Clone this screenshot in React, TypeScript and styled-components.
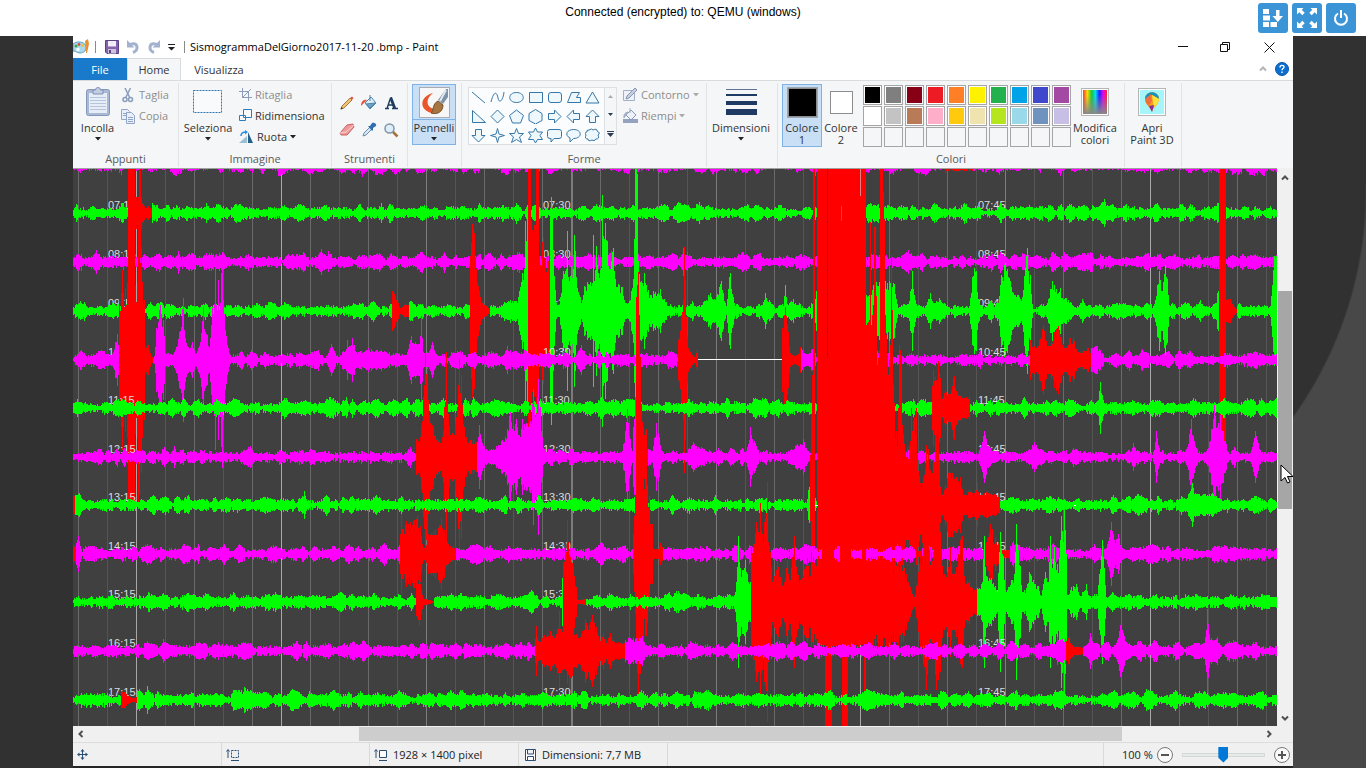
import React from "react";
import styled, { createGlobalStyle, css } from "styled-components";

const GlobalStyle = createGlobalStyle`
  * { box-sizing: border-box; }
  html, body { margin: 0; padding: 0; }
  body { background: #484848; overflow: hidden; }
  button { font: inherit; color: inherit; }
`;

/* ---------- seismogram data ---------- */

type Point = [x: number, up: number, down?: number];
interface Burst { red?: boolean; pts: Point[] }
interface Row { hour: number; y: number; bursts: Burst[]; gap?: [number, number] }

const WIDTH = 1204;
const HEIGHT = 558;

const ROWS: Row[] = [
  { hour: 6, y: -3, bursts: [{ red: true, pts: [[872, 8], [876, 6], [884, 7], [899, 6]] }] },
  { hour: 7, y: 45, bursts: [
    { red: true, pts: [[55, 60], [61, 60], [62, 16], [65, 16], [66, 50], [67, 45], [68, 16], [70, 10], [73, 5], [75, 7], [78, 4]] },
    { pts: [[130, 5], [133, 10], [136, 5]] },
    { pts: [[1024, 5], [1031, 14], [1036, 5]] },
  ] },
  { hour: 8, y: 94, bursts: [
    { pts: [[18, 4], [23, 12], [28, 5]] },
    { pts: [[243, 4], [248, 13], [254, 5]] },
    { pts: [[607, 4], [610, 14], [613, 4]] },
    { pts: [[824, 4], [835, 12], [842, 5]] },
  ] },
  { hour: 9, y: 143, bursts: [
    { red: true, pts: [[319, 20], [321, 17], [325, 8], [327, 3], [332, 7], [335, 6]] },
    { red: true, pts: [[397, 55], [399, 87], [401, 78], [403, 42], [405, 25], [408, 10], [412, 6], [416, 3]] },
    { pts: [[443, 4], [446, 20], [449, 38], [451, 42], [452, 90], [454, 96], [455, 60]] },
    { red: true, pts: [[455, 150], [457, 150], [458, 90], [462, 85], [463, 150], [465, 150], [466, 55], [470, 73], [471, 53], [474, 55], [476, 60]] },
    { pts: [[477, 100], [478, 114], [479, 95], [480, 60], [483, 8], [486, 6], [490, 40], [493, 42], [494, 80], [495, 34], [497, 35], [500, 42], [501, 76], [502, 60], [503, 34], [507, 14], [508, 8], [511, 25], [514, 29], [519, 28], [520, 76], [521, 30], [523, 65], [525, 38], [528, 43], [529, 116], [530, 75], [532, 88], [534, 70], [535, 45], [540, 63], [542, 32], [546, 26], [549, 24], [552, 8], [556, 10], [560, 32], [562, 143], [563, 143], [564, 137], [565, 50], [568, 30], [570, 25], [571, 38], [573, 26], [577, 16], [580, 20], [584, 17], [587, 22], [591, 12], [597, 3]] },
    { pts: [[614, 3], [619, 10], [624, 2], [630, 9], [637, 18], [643, 14], [648, 30], [650, 18], [653, 4], [656, 34], [657, 38], [660, 14], [662, 5]] },
    { pts: [[689, 3], [692, 18], [695, 4]] },
    { pts: [[710, 5], [712, 26], [714, 7], [720, 12], [724, 4]] },
    { pts: [[738, 8], [742, 12], [743, 20], [745, 10]] },
    { pts: [[793, 16], [794, 14], [797, 20], [802, 30], [816, 30], [821, 27], [824, 7]] },
    { pts: [[835, 4], [837, 20], [839, 40], [841, 16], [844, 5]] },
    { pts: [[853, 6], [857, 18], [861, 8], [866, 13], [872, 5]] },
    { pts: [[896, 5], [899, 34], [901, 43], [903, 40], [905, 12], [909, 5]] },
    { pts: [[925, 6], [928, 36], [932, 48], [934, 42], [937, 30], [940, 18], [945, 16], [949, 14], [951, 35], [954, 63], [955, 40], [957, 36], [959, 7]] },
    { pts: [[973, 5], [977, 22], [979, 30], [981, 26], [987, 23], [989, 13], [993, 13], [998, 8], [1004, 3], [1009, 12], [1014, 3]] },
    { pts: [[1081, 7], [1084, 26], [1086, 40], [1089, 20], [1092, 46], [1094, 32], [1096, 6]] },
    { pts: [[1121, 5], [1127, 11], [1131, 5]] },
    { pts: [[1143, 8], [1144, 18], [1145, 20]] },
    { red: true, pts: [[1146, 155], [1152, 155], [1153, 11], [1157, 12], [1160, 6], [1163, 2]] },
    { pts: [[1197, 5], [1199, 26], [1201, 55], [1203, 55]] },
  ] },
  { hour: 10, y: 192, gap: [625, 708], bursts: [
    { pts: [[39, 6], [42, 18], [44, 26], [45, 15]] },
    { red: true, pts: [[46, 60], [48, 67], [49, 90], [50, 67], [52, 72], [54, 78], [55, 143], [61, 143], [62, 75], [64, 78], [65, 143], [68, 113], [69, 78], [71, 60], [72, 14], [75, 15], [79, 3]] },
    { pts: [[81, 4], [83, 32], [86, 50], [87, 55], [90, 40], [92, 7], [99, 5], [102, 10], [106, 28], [110, 62], [111, 30], [115, 13], [119, 18], [122, 6], [127, 18], [130, 53], [132, 28], [134, 25], [136, 12], [139, 52], [142, 90], [143, 55], [145, 80], [146, 50], [149, 108], [150, 60], [153, 24], [156, 7]] },
    { pts: [[254, 4], [258, 16], [262, 7]] },
    { pts: [[271, 5], [274, 20], [276, 14], [279, 22], [283, 8], [295, 12], [307, 9], [316, 8]] },
    { pts: [[334, 8], [338, 24], [342, 18], [346, 16], [348, 42], [350, 8], [354, 7], [359, 18], [363, 6]] },
    { pts: [[430, 5], [434, 14], [441, 5]] },
    { pts: [[503, 5], [508, 15], [513, 5]] },
    { red: true, pts: [[605, 20], [608, 45], [610, 60], [611, 113], [612, 80], [613, 43], [615, 12], [619, 5], [622, 4], [624, 10]] },
    { red: true, pts: [[709, 32], [711, 45], [712, 53], [713, 44], [715, 28], [717, 7], [720, 5], [725, 6], [727, 13]] },
    { pts: [[728, 12], [731, 7], [735, 6]] },
    { red: true, pts: [[957, 20], [961, 14], [966, 20], [970, 35], [974, 13], [978, 18], [981, 28], [985, 34], [988, 22], [992, 13], [996, 22], [1000, 22], [1004, 9], [1010, 10], [1015, 12], [1017, 7]] },
    { pts: [[1018, 12], [1024, 14], [1030, 6]] },
  ] },
  { hour: 11, y: 240, bursts: [
    { pts: [[0, 5], [4, 9], [9, 5]] },
    { red: true, pts: [[859, 22], [860, 38], [863, 28], [865, 47], [867, 30], [868, 11], [872, 18], [876, 14], [881, 32], [884, 16], [888, 12], [896, 12]] },
    { pts: [[1024, 4], [1027, 26], [1030, 8], [1033, 4]] },
  ] },
  { hour: 12, y: 289, bursts: [
    { red: true, pts: [[343, 18], [347, 20], [350, 60], [352, 104], [354, 88], [356, 42], [360, 30], [364, 18], [369, 20], [371, 50], [373, 105], [374, 55], [376, 30], [380, 24], [384, 50], [386, 98], [388, 82], [391, 30], [393, 20], [403, 15]] },
    { pts: [[404, 15], [406, 32], [409, 14], [414, 7], [420, 8], [432, 20], [437, 45], [439, 28], [443, 38], [447, 20], [449, 38], [453, 34], [457, 36], [460, 68], [462, 40], [465, 78], [467, 50], [469, 20], [470, 4]] },
    { pts: [[549, 6], [552, 26], [554, 48], [557, 18], [559, 6]] },
    { pts: [[560, 30], [562, 60]] },
    { red: true, pts: [[563, 160], [565, 185], [567, 100], [569, 35], [573, 28], [574, 8]] },
    { pts: [[579, 6], [583, 34], [586, 20], [588, 7]] },
    { pts: [[615, 8], [620, 15], [625, 10], [630, 6]] },
    { pts: [[673, 6], [677, 30], [681, 16], [685, 7]] },
    { pts: [[718, 8], [724, 13], [730, 18], [734, 7]] },
    { pts: [[906, 7], [911, 26], [915, 11], [923, 5]] },
    { pts: [[955, 7], [961, 15], [966, 7]] },
    { pts: [[1057, 5], [1060, 14], [1063, 6]] },
    { pts: [[1081, 7], [1083, 26], [1086, 9]] },
    { pts: [[1113, 8], [1117, 28], [1118, 38], [1121, 16], [1124, 7]] },
    { pts: [[1135, 9], [1138, 28], [1141, 52], [1144, 30], [1147, 42], [1150, 26], [1153, 13]] },
    { pts: [[1178, 7], [1182, 26], [1187, 7]] },
  ] },
  { hour: 13, y: 337, bursts: [
    { red: true, pts: [[0, 9], [1, 9]] },
    { pts: [[2, 10], [6, 12], [11, 5]] },
    { pts: [[225, 6], [229, 9], [231, 14], [234, 4]] },
    { pts: [[734, 6], [735, 15], [736, 18]] },
    { red: true, pts: [[737, 50, 16], [738, 90, 50], [739, 130, 80], [740, 345, 95], [741, 345, 95]] },
    { red: true, pts: [[744, 345, 140], [751, 345, 140], [752, 345, 225], [758, 345, 225], [759, 345, 140], [768, 345, 140], [769, 345, 225], [774, 345, 225], [775, 345, 140], [790, 345, 140], [791, 345, 205], [792, 345, 205], [793, 180, 140], [796, 185, 130], [797, 283, 130], [798, 180, 130], [800, 200, 130], [801, 278, 130], [802, 278, 120], [804, 140, 120], [806, 155, 130], [807, 342, 130], [809, 342, 110], [811, 285, 100], [812, 190, 90], [815, 130, 80], [817, 160, 75], [818, 250, 75], [819, 195, 70], [820, 120, 65], [824, 60, 55], [826, 160, 60], [828, 150, 80], [829, 80, 60], [832, 55, 40], [836, 60, 45], [838, 97, 55], [843, 97, 60], [844, 50, 60], [847, 22, 30], [851, 30, 60], [853, 60, 100], [855, 56, 90], [857, 35, 50], [860, 45, 60], [862, 70, 85], [865, 75, 75], [867, 18], [869, 10], [872, 20], [875, 32], [879, 32], [882, 28], [887, 28], [889, 16], [893, 10], [896, 15], [901, 12], [904, 22], [906, 12], [914, 14], [921, 11], [926, 9]] },
    { pts: [[1113, 6], [1119, 22], [1122, 12], [1130, 11], [1139, 12], [1148, 6]] },
  ] },
  { hour: 14, y: 386, bursts: [
    { red: true, pts: [[0, 9], [2, 9]] },
    { pts: [[3, 11], [5, 18], [8, 5]] },
    { red: true, pts: [[327, 20], [328, 40], [330, 25], [333, 33], [337, 32], [340, 33], [344, 38], [347, 28], [349, 10], [352, 4], [355, 20], [360, 22], [365, 26], [368, 36], [371, 24], [374, 12], [378, 8], [382, 7]] },
    { pts: [[523, 7], [528, 12], [534, 6]] },
    { red: true, pts: [[560, 20], [562, 60], [563, 95], [565, 141], [567, 120], [570, 90], [573, 82], [576, 58], [577, 30], [579, 30], [580, 6], [585, 5], [587, 11], [589, 7]] },
    { pts: [[590, 5], [595, 7], [600, 4]] },
    { red: true, pts: [[749, 4], [760, 4]] },
    { red: true, pts: [[767, 4], [777, 4]] },
    { red: true, pts: [[789, 4], [792, 4]] },
    { red: true, pts: [[843, 4], [848, 4]] },
    { red: true, pts: [[862, 4], [868, 4]] },
    { red: true, pts: [[911, 10], [914, 16], [917, 30], [919, 25], [920, 12], [922, 17], [925, 10], [928, 4], [936, 4]] },
    { pts: [[937, 8], [940, 13], [944, 10], [949, 7]] },
    { pts: [[1033, 6], [1037, 24], [1038, 32], [1041, 14], [1045, 20], [1048, 8], [1053, 4]] },
  ] },
  { hour: 15, y: 434, bursts: [
    { pts: [[83, 5], [90, 9], [96, 5]] },
    { red: true, pts: [[343, 14], [346, 24], [348, 12], [350, 4], [354, 3], [360, 1]] },
    { pts: [[452, 7], [458, 12], [464, 6]] },
    { pts: [[488, 6], [489, 24]] },
    { red: true, pts: [[490, 40], [492, 60], [494, 82], [495, 60], [497, 45], [500, 36], [503, 15], [504, 3], [512, 3]] },
    { pts: [[597, 5], [603, 11], [611, 9], [614, 4]] },
    { pts: [[661, 4], [663, 20], [665, 66], [667, 34], [670, 32], [672, 42], [674, 28], [677, 20]] },
    { red: true, pts: [[678, 55], [681, 58], [683, 80], [685, 70], [687, 99], [689, 68], [692, 84], [694, 120], [695, 60], [697, 50], [699, 20], [702, 28], [704, 42], [707, 25], [711, 20], [714, 42], [716, 22], [719, 45], [721, 66], [723, 35], [727, 22], [732, 35], [734, 44], [737, 26], [738, 50], [742, 38], [748, 40, 46], [755, 40, 52], [765, 40, 47], [775, 40, 50], [785, 40, 45], [795, 40, 50], [805, 40, 45], [815, 40, 47], [825, 40, 44], [830, 40], [833, 28], [837, 15], [841, 5], [845, 30], [847, 50], [850, 62], [853, 88], [856, 52], [860, 50], [863, 88], [867, 70], [869, 36], [873, 25], [877, 55], [879, 28], [883, 35], [887, 62], [889, 66], [891, 26], [896, 22], [899, 14], [903, 13]] },
    { pts: [[904, 14], [909, 20], [911, 66], [913, 26], [918, 24], [922, 16], [924, 10], [927, 70], [930, 46], [932, 12], [938, 22], [941, 28], [943, 78], [945, 52], [947, 36], [949, 10], [953, 14], [956, 30], [960, 22], [965, 16], [968, 6], [972, 30], [975, 20], [977, 66], [979, 34], [981, 55], [984, 38], [986, 44], [988, 86], [990, 60], [991, 98], [993, 48], [994, 7], [998, 15], [1003, 18], [1007, 6], [1013, 18], [1016, 4]] },
    { pts: [[1024, 5], [1026, 28], [1029, 62], [1031, 34], [1033, 4], [1039, 10], [1045, 4]] },
    { pts: [[1182, 5], [1188, 8], [1196, 7], [1203, 5]] },
  ] },
  { hour: 16, y: 483, bursts: [
    { pts: [[86, 4], [90, 12], [94, 5]] },
    { pts: [[274, 5], [280, 10], [285, 5], [290, 11], [298, 4]] },
    { red: true, pts: [[462, 12], [463, 25], [466, 9], [470, 15], [477, 20], [480, 17], [484, 22], [486, 40], [488, 22], [491, 18], [496, 38], [499, 25], [504, 16], [509, 20], [512, 32], [516, 26], [519, 36], [523, 24], [526, 12], [530, 18], [533, 8], [537, 18], [541, 9], [551, 8]] },
    { pts: [[552, 11], [556, 14], [562, 12], [569, 15], [573, 6]] },
    { pts: [[981, 4], [984, 14], [988, 11], [992, 13]] },
    { red: true, pts: [[993, 10], [996, 14], [999, 6], [1004, 5], [1009, 3]] },
    { pts: [[1010, 4], [1015, 8], [1017, 18], [1020, 8], [1025, 3]] },
    { pts: [[1042, 4], [1046, 20], [1048, 38], [1050, 18], [1053, 8], [1062, 3]] },
    { pts: [[1128, 4], [1132, 14], [1134, 42], [1136, 17], [1140, 10], [1144, 14], [1148, 5]] },
  ] },
  { hour: 17, y: 532, bursts: [
    { red: true, pts: [[48, 8], [51, 8], [55, 4], [60, 2], [63, 3]] },
    { pts: [[70, 4], [74, 14], [77, 4]] },
    { pts: [[168, 4], [171, 13], [178, 9], [186, 8], [196, 5]] },
  ] },
];

/* minute rules, the five-minute ones are brighter */
const RULES: [number, string, number][] = Array.from({ length: 42 }, (_, i) => {
  const x = Math.round(5 + i * 28.98);
  if ([2, 7, 27, 37].includes(i)) return [x, "#a8a8a8", 1];
  if (i % 5 === 2) return [x, "#7c7c7c", i === 17 ? 2 : 1];
  return [x, i % 2 ? "#555555" : "#6a6a6a", 1];
});

const COLORS = { green: "#00ff00", magenta: "#ff00ff", red: "#ff0000" };

function random(seed: number) {
  let s = seed;
  return () => {
    s = (s * 1664525 + 1013904223) >>> 0;
    return s / 4294967296;
  };
}

/* background tremor: swelling beads with a ragged edge */
function noise(seed: number): number[] {
  const rnd = random(seed);
  const out: number[] = [];
  let from = 3;
  let high = true;
  while (out.length < WIDTH) {
    const to = high ? 4 + Math.pow(rnd(), 1.4) * 6 : 2 + rnd() * 3;
    const steps = 3 + Math.floor(rnd() * 6);
    for (let i = 0; i < steps; i++) {
      out.push(from + (to - from) * (i / steps) + (rnd() - 0.5) * 3);
    }
    from = to;
    high = !high || rnd() > 0.7;
  }
  return out.map((v) => Math.max(2, v));
}

function buildRow(row: Row) {
  const base = noise(row.hour * 7919 + 31);
  const rnd = random(row.hour * 104729 + 7);
  const up = base.slice(0, WIDTH);
  const down = up.map((v) => Math.max(1, v + (rnd() - 0.5) * 2));
  const red = new Array<boolean>(WIDTH).fill(false);
  row.bursts.forEach((burst) => {
    for (let k = 0; k < burst.pts.length - 1; k++) {
      const [x0, u0, d0 = u0] = burst.pts[k];
      const [x1, u1, d1 = u1] = burst.pts[k + 1];
      for (let x = x0; x <= x1 && x < WIDTH; x++) {
        const t = x1 === x0 ? 0 : (x - x0) / (x1 - x0);
        const steady = x === x0 || x === x1 || u0 + u1 > 280;
        const j = steady ? 1 : 0.7 + rnd() * 0.32;
        const u = (u0 + (u1 - u0) * t) * j;
        const d = (d0 + (d1 - d0) * t) * j;
        up[x] = burst.red ? u : Math.max(up[x], u);
        down[x] = burst.red ? d : Math.max(down[x], d);
        if (burst.red) red[x] = true;
      }
    }
  });
  let plain = "";
  let hot = "";
  for (let x = 0; x < WIDTH; x++) {
    if (row.gap && x >= row.gap[0] && x <= row.gap[1]) continue;
    const top = Math.round(row.y - up[x]);
    const h = Math.max(2, Math.round(row.y + down[x]) - top);
    const part = `M${x} ${top}h1v${h}h-1z`;
    if (red[x]) hot += part;
    else plain += part;
  }
  return { plain, hot };
}

const TRACES = ROWS.map((row) => ({ row, ...buildRow(row) }));
const pad = (n: number) => String(n).padStart(2, "0");

const Plot = styled.svg`
  display: block;
  width: 100%;
  height: auto;
  background: #404040;
  font-family: "Liberation Sans", sans-serif;
  font-size: 11px;
`;

function Seismogram() {
  return (
    <Plot viewBox={`0 0 ${WIDTH} ${HEIGHT}`} role="img" aria-label="Seismogram">
      <g shapeRendering="crispEdges">
        {RULES.map(([x, fill, w]) => (
          <rect key={x} x={x} y="0" width={w} height={HEIGHT} fill={fill} />
        ))}
      </g>
      {TRACES.map(({ row, plain, hot }) => (
        <g key={row.hour}>
          {row.hour > 6 &&
            [[35, "15"], [470, "30"], [905, "45"]].map(([x, m]) => (
              <text key={m} x={x} y={row.y - 4} fill="#dcdcdc">{`${pad(row.hour)}:${m}`}</text>
            ))}
          <g shapeRendering="crispEdges">
            <path d={plain} fill={row.hour % 2 ? COLORS.green : COLORS.magenta} />
            <path d={hot} fill={COLORS.red} />
            {row.gap && <rect x={row.gap[0]} y={row.y - 1} width={row.gap[1] - row.gap[0] + 1} height="1" fill="#ffffff" />}
          </g>
        </g>
      ))}
      <g shapeRendering="crispEdges">
        <path d="M742 337h3v1h-3zM1001 337h2v1h-2z" fill="#fff" />
        <path d="M754 0h1v190h-1z" fill="#a01010" />
        <path d="M768 38h1v15h-1z" fill="#30a020" />
        <path d="M787 0h1v28h-1z" fill="#e08080" />
        <path d="M0 0h1204v1h-1204z" fill="#a0a0a0" />
      </g>
    </Plot>
  );
}

/* ---------- page shell ---------- */

const Page = styled.div`
  min-height: 100vh;
  display: flex;
  flex-direction: column;
  background:
    linear-gradient(#313131, #313131) left / 50% 100% no-repeat,
    linear-gradient(#313131, #313131) top / 100% 184px no-repeat,
    radial-gradient(circle at calc(100% - 390px) 190px, #313131 389px, #484848 391px);
  font-family: "Open Sans", "Noto Sans", sans-serif;
  font-size: 11px;
  line-height: 15px;
  color: #1e1e1e;
`;

const TopBar = styled.header`
  display: grid;
  grid-template-columns: 1fr auto 1fr;
  align-items: start;
  height: 36px;
  padding: 3px 10px;
  background: #fff;
  font: 12px/18px "Liberation Sans", sans-serif;
  color: #000;
`;

const Actions = styled.div`
  grid-column: 3;
  justify-self: end;
  display: flex;
  gap: 4px;
`;

const ActionButton = styled.button`
  display: grid;
  place-items: center;
  width: 30px;
  height: 30px;
  padding: 0;
  border: 0;
  border-radius: 3px;
  background: #3b94d6;
`;

const Status = styled.span`
  grid-column: 2;
`;

const Window = styled.main`
  flex: 1;
  display: flex;
  flex-direction: column;
  margin: 0 73px;
  background: #fff;
  border-bottom: 2px solid #252525;
`;

const TitleBar = styled.div`
  display: flex;
  align-items: center;
  height: 22px;
`;

const QuickTools = styled.div`
  display: flex;
  align-items: center;
`;

const IconButton = styled.button<{ $w?: number }>`
  display: grid;
  place-items: center;
  width: ${(p) => p.$w ?? 21}px;
  height: 20px;
  padding: 0;
  border: 0;
  background: none;
`;

const Divider = styled.span<{ $gap: number }>`
  width: 1px;
  height: 12px;
  margin: 0 ${(p) => p.$gap}px;
  background: #8a8a8a;
`;

const Title = styled.h1`
  flex: 1;
  margin: 0;
  padding-bottom: 1px;
  font-size: 11px;
  font-weight: 400;
  color: #000;
`;

const Tabs = styled.nav`
  display: flex;
  height: 22px;
`;

const Tab = styled.button<{ $kind: "file" | "active" | "plain" }>`
  width: ${(p) => (p.$kind === "plain" ? 76 : 54)}px;
  padding: 0;
  border: 0;
  background: none;
  color: #333;
  ${(p) => p.$kind === "file" && css`background: #1979ca; color: #fff;`}
  ${(p) => p.$kind === "active" && css`
    background: #f5f6f7;
    border: solid #dadbdc;
    border-width: 1px 1px 0;
  `}
`;

const TabEnd = styled.div`
  display: flex;
  align-items: center;
  margin-left: auto;
  padding-right: 2px;
`;

/* ---------- ribbon ---------- */

const Ribbon = styled.section`
  display: flex;
  height: 88px;
  padding: 2px 0 1px;
  background: #f5f6f7;
  border-top: 1px solid #dadbdc;
`;

const Group = styled.div<{ $w: number }>`
  display: flex;
  flex-direction: column;
  flex: none;
  width: ${(p) => p.$w}px;
  border-right: 1px solid #e2e3e4;
`;

const GroupBody = styled.div<{ $gap?: number; $pad?: number }>`
  flex: 1;
  display: flex;
  align-items: flex-start;
  gap: ${(p) => p.$gap ?? 0}px;
  padding: 1px 0 0 ${(p) => p.$pad ?? 4}px;
`;

const GroupName = styled.div`
  height: 16px;
  text-align: center;
  color: #5a5a5a;
`;

const BigButton = styled.button<{ $w: number; $on?: boolean }>`
  display: flex;
  flex-direction: column;
  align-items: center;
  width: ${(p) => p.$w}px;
  height: ${(p) => (p.$w === 44 ? 61 : 63)}px;
  padding: 0;
  border: 1px solid ${(p) => (p.$on ? "#7fb3e6" : "transparent")};
  background: ${(p) => (p.$on ? "#c9dff5" : "none")};
  line-height: 12px;
  white-space: nowrap;
  color: #333;
  > svg { margin-top: 3px; }
`;

const BigIcon = styled.span<{ $line?: boolean }>`
  display: grid;
  place-items: center;
  width: 100%;
  height: 35px;
  margin-bottom: 2px;
  border-bottom: 1px solid ${(p) => (p.$line ? "#7fb3e6" : "transparent")};
`;

const Stack = styled.div`
  display: flex;
  flex-direction: column;
`;

const SmallButton = styled.button<{ $off?: boolean }>`
  display: flex;
  align-items: center;
  gap: 3px;
  height: 21px;
  padding: 0;
  border: 0;
  background: none;
  white-space: nowrap;
  color: ${(p) => (p.$off ? "#8d8d8d" : "#333")};
`;

const ToolGrid = styled.div`
  display: grid;
  grid-template-columns: repeat(3, 22px);
  grid-auto-rows: 27px;
  padding: 6px 0 0 4px;
`;

const ToolButton = styled.button`
  display: grid;
  place-items: center;
  padding: 0;
  border: 0;
  background: none;
`;

const Gallery = styled.div`
  display: flex;
  width: 149px;
  height: 58px;
  margin-top: 3px;
  border: 1px solid #dcdfe3;
  background: #fbfcfd;
`;

const ShapeGrid = styled.div`
  display: grid;
  grid-template-columns: repeat(7, 19px);
  grid-auto-rows: 19px;
  width: 135px;
`;

const GallerySide = styled.div`
  flex: 1;
  display: flex;
  flex-direction: column;
  justify-content: space-around;
  align-items: center;
  border-left: 1px solid #dcdfe3;
  background: #f5f6f7;
`;

const ColorBox = styled.span<{ $c: string; $s: number }>`
  width: ${(p) => p.$s}px;
  height: ${(p) => p.$s}px;
  border: 1px solid #8d8d8d;
  outline: ${(p) => (p.$s > 25 ? "1px solid #9aa7b5" : "none")};
  background: ${(p) => p.$c};
`;

const Palette = styled.div`
  display: grid;
  grid-template-columns: repeat(10, 19px);
  grid-auto-rows: 20px;
  gap: 1px 2px;
  margin: 1px 0 0 3px;
`;

const Swatch = styled.button<{ $c?: string }>`
  padding: 0;
  border: 1px solid #a5a5a5;
  background: ${(p) => p.$c ?? "#f5f6f7"};
  box-shadow: inset 0 0 0 1px ${(p) => (p.$c ? "#fff" : "#f5f6f7")};
`;

const PALETTE = [
  "#000000", "#7f7f7f", "#880015", "#ed1c24", "#ff7f27", "#fff200", "#22b14c", "#00a2e8", "#3f48cc", "#a349a4",
  "#ffffff", "#c3c3c3", "#b97a57", "#ffaec9", "#ffc90e", "#efe4b0", "#b5e61d", "#99d9ea", "#7092be", "#c8bfe7",
];

/* ---------- canvas and status bar ---------- */

const Workspace = styled.div`
  display: grid;
  grid-template-columns: 1fr 16px;
`;

const VScroll = styled.div`
  display: flex;
  flex-direction: column;
  align-items: center;
  padding: 5px 0 3px;
  background: #f0f0f0;
`;

const VThumb = styled.div`
  position: relative;
  flex: 218;
  width: 14px;
  background: #a6a6a6;
`;

const Space = styled.div<{ $n: number }>`
  flex: ${(p) => p.$n};
`;

const Pointer = styled.svg`
  position: absolute;
  left: 2px;
  bottom: 25px;
`;

const HScroll = styled.div`
  display: flex;
  align-items: center;
  height: 16px;
  padding: 0 19px 0 3px;
  background: #f0f0f0;
`;

const HThumb = styled.div`
  flex: 763;
  height: 14px;
  background: #cdcdcd;
`;

const StatusBar = styled.footer`
  flex: 1;
  display: flex;
  min-height: 24px;
  border-top: 1px solid #dcdcdc;
  background: #f0f0f0;
  color: #222;
`;

const StatusCell = styled.div<{ $w: number }>`
  display: flex;
  align-items: center;
  gap: 5px;
  width: ${(p) => p.$w}px;
  padding-left: 4px;
  border-right: 1px solid #d9d9d9;
  white-space: nowrap;
`;

const ZoomArea = styled.div`
  display: flex;
  align-items: center;
  gap: 4px;
  width: 190px;
  margin-left: auto;
  padding-left: 18px;
  border-left: 1px solid #d9d9d9;
`;

const RoundButton = styled.button`
  display: grid;
  place-items: center;
  width: 16px;
  height: 16px;
  padding: 0;
  border: 1px solid #777;
  border-radius: 50%;
  background: #fafafa;
`;

const Slider = styled.input`
  appearance: none;
  width: 83px;
  height: 16px;
  margin: 0 5px;
  background: none;
  &::-webkit-slider-runnable-track {
    height: 4px;
    border: 1px solid #d3d8d8;
    background: #e8eaea;
  }
  &::-webkit-slider-thumb {
    appearance: none;
    width: 10px;
    height: 16px;
    margin-top: -7px;
    background: #0078d7;
    clip-path: polygon(0 0, 100% 0, 100% 70%, 50% 100%, 0 70%);
  }
`;

/* ---------- icons ---------- */

const Caret = ({ c = "#222" }: { c?: string }) => (
  <svg width="6" height="4" viewBox="0 0 6 4"><path d="M0 0h6L3 3.5z" fill={c} /></svg>
);

const Chevron = ({ dir, c = "#505050" }: { dir: number; c?: string }) => (
  <svg width="10" height="10" viewBox="0 0 10 10">
    <path d="M2 6.5l3-3 3 3" fill="none" stroke={c} strokeWidth="2" transform={`rotate(${dir} 5 5)`} />
  </svg>
);

const PaintIcon = () => (
  <svg width="17" height="16" viewBox="0 0 17 16">
    <path d="M0 5C3 2 11 2 13 7c1 4-2 7-6 7-3 0-3-2-7-2z" fill="#a9d7ee" stroke="#5e9fc4" />
    <circle cx="3" cy="7" r="1.5" fill="#3ba54a" /><circle cx="6" cy="5.5" r="1.4" fill="#e04c3b" />
    <circle cx="9.5" cy="6.5" r="1.4" fill="#f3c229" /><circle cx="5" cy="10.5" r="1.7" fill="#fff" />
    <path d="M12 2l3-2 1 5-2 9h-1z" fill="#e89032" />
  </svg>
);
const SaveIcon = () => (
  <svg width="14" height="14" viewBox="0 0 14 14">
    <path d="M.5.5h13v13H2L.5 12z" fill="#8562ad" stroke="#5d4185" />
    <path d="M3 1h8v5.500H3z" fill="#f2eef7" /><path d="M3 9h8v4.500H3z" fill="#cfc4dd" /><path d="M4 10h2v3H4z" fill="#5d4185" />
  </svg>
);
const UndoIcon = ({ flip }: { flip?: boolean }) => (
  <svg width="14" height="14" viewBox="0 0 14 14">
    <g transform={flip ? "translate(14 0) scale(-1 1)" : undefined}>
      <path d="M3 5.500C6 3 10.500 3 11 7c.3 2.500-1.500 4.500-4 5.500" fill="none" stroke="#a3b3cf" strokeWidth="3" />
      <path d="M1 0v7.500h7.500z" fill="#a3b3cf" />
    </g>
  </svg>
);
const ClipboardIcon = () => (
  <svg width="26" height="30" viewBox="0 0 26 30">
    <rect x="1.5" y="2.5" width="23" height="26" rx="2" fill="#a9b8d3" stroke="#8497ba" />
    <path d="M4 6h18v20H4z" fill="#e6edf7" />
    <path d="M5 10.500h16M5 13.500h16M5 16.500h16M5 19.500h16M5 22.500h16" stroke="#b7c5dc" />
    <path d="M8 3h2.500a2.500 2.500 0 0 1 5 0H18v4H8z" fill="#c3cee2" stroke="#7f91b5" />
  </svg>
);
const ScissorsIcon = () => (
  <svg width="16" height="16" viewBox="0 0 16 16" fill="none" stroke="#8a9cbc" strokeWidth="1.5">
    <path d="M5 1l5 10M10.500 1L5.500 11" /><circle cx="5" cy="12.5" r="2" /><circle cx="10.5" cy="12.5" r="2" />
  </svg>
);
const CopyIcon = () => (
  <svg width="16" height="16" viewBox="0 0 16 16" fill="#e9eff8" stroke="#93a5c6">
    <path d="M1.500 1.500h6l2 2v8h-8z" /><path d="M6.500 4.500h5l3 3v8h-8z" /><path d="M3 5.500h3M3 7.500h3M8 9.500h5M8 11.500h5M8 13.500h5" />
  </svg>
);
const SelectIcon = () => (
  <svg width="30" height="24" viewBox="0 0 30 24">
    <rect x=".5" y=".5" width="28" height="22" fill="#f8fafc" stroke="#2d74ad" strokeDasharray="2 1" />
  </svg>
);
const CropIcon = () => (
  <svg width="13" height="13" viewBox="0 0 13 13" fill="none" stroke="#8d9cba"><path d="M3.500 0v9.500H13M0 3.500h9.500V13M3 10l9-9" /></svg>
);
const ResizeIcon = () => (
  <svg width="13" height="13" viewBox="0 0 13 13" fill="#f8fbfd" stroke="#2d7dbb"><path d="M4.500.5h8v8h-8zM.5 6.500h6v5h-6z" /></svg>
);
const RotateIcon = () => (
  <svg width="15" height="14" viewBox="0 0 15 14">
    <path d="M0 13l8-7v7z" fill="#9dbed2" /><path d="M9 2l5 11H9z" fill="#22618c" />
    <path d="M2 6c0-4 3-4 5-4" fill="none" stroke="#2c8de0" strokeWidth="1.5" /><path d="M6 0l3 2-3 2.500z" fill="#2c8de0" />
  </svg>
);
const tools: [string, React.ReactNode][] = [
  ["Matita", <><path d="M2 14l1-3 8-8 2 2-8 8z" fill="#f2c16b" stroke="#8a6235" strokeWidth=".8" /><path d="M11 3l2-1.500 1.500 1.500L13 5z" fill="#d9574c" /><path d="M1.500 14.500l1-2.500 1.500 1.500z" fill="#333" /></>],
  ["Riempimento", <><path d="M4 8l6-6 5 6-6 6z" fill="#dfeef8" stroke="#4c87b5" /><path d="M0 11c0-5 3-7 6-6L3 8z" fill="#e4543b" /><path d="M9 0v6M5 9l9-1-5 5z" fill="#6aa4cf" stroke="#5083a8" /></>],
  ["Testo", <><path d="M2 13.500h4M9 13.500h6M4 13.500L7.500 3M5 10h6" fill="none" stroke="#1f3c5e" strokeWidth="1.400" /><path d="M7.500 2h1.500l4.500 12h-3L7 5z" fill="#1f3c5e" /></>],
  ["Gomma", <><path d="M1 11l7-8 6-1 1 3-7 8H2z" fill="#ee9a9a" stroke="#c8605f" /><path d="M1 11l6-1 8-7" fill="none" stroke="#f9d4d2" /></>],
  ["Selettore colore", <><path d="M2 14l1-3 6-6 2 2-6 6z" fill="#d6e8f6" stroke="#6b8fae" /><path d="M7 4l2 0 2-3c2-1 5 1 4 3l-3 2v2l-1 1z" fill="#2f6fae" /></>],
  ["Lente", <><circle cx="6.5" cy="6.5" r="4.5" fill="#dceefa" stroke="#8294a6" strokeWidth="1.5" /><path d="M10 10l4.500 4.500" stroke="#a0733c" strokeWidth="2.5" /></>],
];
const BrushIcon = () => (
  <svg width="31" height="31" viewBox="0 0 31 31">
    <rect x=".5" y=".5" width="30" height="30" fill="#f7f7f7" stroke="#a9adb2" />
    <path d="M14 6C1 9-1 23 13 26l4-4C8 22 5 13 14 6z" fill="#e8562a" />
    <path d="M29 2v8l-5 7-5-4 8-11z" fill="#7d93a8" /><path d="M27 3l-6 11" stroke="#e2e8ee" strokeWidth="2" />
    <path d="M19 14l5 4c0 7-6 10-12 8 3-2 1-9 7-12z" fill="#a8743f" stroke="#74502a" />
  </svg>
);
const SHAPES = [
  "M1 2l13 11", "M1 12C4 0 7 2 8 8s5 3 6-6", "M7.500 2.500c9 0 9 10 0 10s-9-10 0-10z", "M1.500 2.500h13v10h-13z",
  "M4 2.500h8q2.500 0 2.500 2.500v5q0 2.500-2.500 2.500H4q-2.500 0-2.500-2.500V5Q1.500 2.500 4 2.500z", "M5.500 2.500h8l-3 5h4v5H1.500z", "M7.500 2l6.500 11H1z",
  "M1.500 1.500v12h13z", "M7.500 1l6.500 6.500-6.500 6.500L1 7.500z", "M7.500 1l7 5.500-3 7.500H3.500L.5 6.500z", "M7.500.5l6.500 4v7l-6.500 3.500L1 11.500v-7z",
  "M1.500 4.500h6V1l6.500 6.500L7.500 14v-3.500h-6z", "M13.500 4.500h-6V1L1 7.500 7.500 14v-3.500h6z", "M4.500 13.500v-6H1L7.500 1 14 7.500h-3.500v6z",
  "M4.500 1.500v6H1L7.500 14 14 7.500h-3.500v-6z", "M7.500.5L9 6l5.500 1.500L9 9l-1.500 5.500L6 9 .5 7.500 6 6z", "M7.500.5l2 5h5l-4 3.500 2 5.500-5-3-5 3 2-5.500L.5 5.500h5z",
  "M7.500 0l2 4h5L12 7.500l2.500 4h-5L7.500 15l-2-3.500h-5L3 7.500.5 4h5z", "M3 1.500h9q2.500 0 2.500 2v5q0 2-2.500 2H7L4 14v-3.500H3Q.5 10.500.5 8.500v-5q0-2 2.500-2z",
  "M7.500 1.500c9 0 9 9 0 9L4 14v-4C-2 7 1 1.500 7.500 1.500z", "M4 2q3-2 4 0 4-2 4 1 4 2 1 4 2 4-2 4-2 3-4 1-4 2-4-1-4 0-2-4-2-3 1-3-1-2 2-2z",
];
const ContourIcon = () => (
  <svg width="15" height="14" viewBox="0 0 15 14"><path d="M.5 2.500h11v10H.5z" fill="#eef2f8" stroke="#a3b0c8" /><path d="M3 11l1-3 8-8 2 2-8 8z" fill="#c7d0e0" stroke="#8797b5" /></svg>
);
const FillIcon = () => (
  <svg width="15" height="15" viewBox="0 0 15 15"><path d="M0 11h15v4H0z" fill="#93a2bf" /><path d="M3 7l5-5 5 5-5 5z" fill="#eef2f8" stroke="#8797b5" /><path d="M7 0v5M1 10q-1-5 4-6z" fill="#a3b0c8" stroke="#a3b0c8" /></svg>
);
const SizesIcon = () => (
  <svg width="31" height="26" viewBox="0 0 31 26" fill="#1f3a63"><path d="M0 0h31v1H0z" opacity=".7" /><path d="M0 5h31v2H0zM0 12h31v4H0zM0 20h31v6H0z" /></svg>
);
const RainbowIcon = () => (
  <svg width="28" height="28" viewBox="0 0 28 28">
    <defs>
      <linearGradient id="hue"><stop offset="0" stopColor="#f33" /><stop offset=".18" stopColor="#fd0" /><stop offset=".36" stopColor="#1c3" /><stop offset=".52" stopColor="#0df" /><stop offset=".68" stopColor="#22f" /><stop offset=".85" stopColor="#e0e" /><stop offset="1" stopColor="#f22" /></linearGradient>
      <linearGradient id="fade" x2="0" y2="1"><stop offset=".2" stopColor="#888" stopOpacity="0" /><stop offset="1" stopColor="#888" /></linearGradient>
    </defs>
    <rect x=".5" y=".5" width="27" height="27" fill="#fff" stroke="#b5b5b5" />
    <rect x="2" y="2" width="24" height="24" fill="url(#hue)" /><rect x="2" y="2" width="24" height="24" fill="url(#fade)" />
  </svg>
);
const Paint3DIcon = () => (
  <svg width="28" height="28" viewBox="0 0 28 28">
    <rect x=".5" y=".5" width="27" height="27" fill="#fff" stroke="#b5b5b5" /><rect x="2" y="2" width="24" height="24" fill="#a5f5fb" />
    <path d="M7 11C7 2 21 2 21 11c0 6-6 8-7 13-1-4-7-7-7-13z" fill="#f7a61c" />
    <path d="M7 11C7 2 21 2 21 11L14 7z" fill="#1994b8" /><path d="M14 7l7 4c0 4-3 6-5 8z" fill="#ffe23c" />
    <path d="M7 11l6-5 1 7-3 5c-2-2-4-4-4-7z" fill="#f0703c" /><path d="M11 18l5-1-2 7z" fill="#8b2a9b" />
  </svg>
);

/* ---------- app ---------- */

export default function App() {
  return (
    <Page>
      <GlobalStyle />
      <TopBar>
        <Status>Connected (encrypted) to: QEMU (windows)</Status>
        <Actions>
          <ActionButton aria-label="Send keys">
            <svg width="20" height="18" viewBox="0 0 20 18" fill="#fff"><path d="M0 0h6v5H0zM0 6.500h7v5H0zM0 13h6v5H0zM7.500 13H14v5H7.500zM13 1h3.500v6H20l-5.200 6L9.500 7H13z" /></svg>
          </ActionButton>
          <ActionButton aria-label="Fullscreen">
            <svg width="20" height="20" viewBox="0 0 20 20" fill="#fff"><path d="M0 0h6.500L4.700 1.800l3 3-2.400 2.400-3-3L0 6.500zM20 0h-6.500l1.800 1.800-3 3 2.400 2.400 3-3L20 6.500zM0 20h6.500l-1.800-1.800 3-3-2.400-2.400-3 3L0 13.500zM20 20h-6.500l1.800-1.800-3-3 2.400-2.400 3 3 2.300-2.300z" /></svg>
          </ActionButton>
          <ActionButton aria-label="Disconnect">
            <svg width="16" height="18" viewBox="0 0 16 18" fill="none" stroke="#fff" strokeWidth="2"><path d="M5 4.500a6 6 0 1 0 6 0M8 1v8" /></svg>
          </ActionButton>
        </Actions>
      </TopBar>

      <Window>
        <TitleBar>
          <QuickTools>
            <PaintIcon />
            <Divider $gap={5} />
            <IconButton aria-label="Salva"><SaveIcon /></IconButton>
            <IconButton aria-label="Annulla"><UndoIcon /></IconButton>
            <IconButton aria-label="Ripeti"><UndoIcon flip /></IconButton>
            <IconButton $w={15} aria-label="Personalizza">
              <svg width="7" height="7" viewBox="0 0 7 7"><path d="M0 0h7v1H0zM0 3h7L3.500 6.500z" fill="#222" /></svg>
            </IconButton>
            <Divider $gap={5} />
          </QuickTools>
          <Title>SismogrammaDelGiorno2017-11-20 .bmp - Paint</Title>
          <IconButton $w={44} aria-label="Riduci a icona"><svg width="10" height="2"><path d="M0 0h10v1H0z" fill="#111" /></svg></IconButton>
          <IconButton $w={40} aria-label="Ripristina"><svg width="11" height="10" viewBox="0 0 11 10" fill="none" stroke="#111"><path d="M.5 2.500h7v7h-7zM2.500 2.500v-2h7v7h-2" /></svg></IconButton>
          <IconButton $w={48} aria-label="Chiudi"><svg width="11" height="11" viewBox="0 0 11 11"><path d="M.5.5l10 10M10.500.5l-10 10" stroke="#111" /></svg></IconButton>
        </TitleBar>

        <Tabs>
          <Tab $kind="file">File</Tab>
          <Tab $kind="active">Home</Tab>
          <Tab $kind="plain">Visualizza</Tab>
          <TabEnd>
            <IconButton aria-label="Comprimi"><Chevron dir={0} c="#b5b5b5" /></IconButton>
            <IconButton $w={18} aria-label="Guida">
              <svg width="14" height="14" viewBox="0 0 14 14"><circle cx="7" cy="7" r="6.5" fill="#0a6fd0" stroke="#0a55a5" /><path d="M5 5.500c0-3 4-2.500 4-.5 0 1.500-2 1.500-2 3.200M7 9.500V11" fill="none" stroke="#fff" strokeWidth="1.4" /></svg>
            </IconButton>
          </TabEnd>
        </Tabs>

        <Ribbon>
          <Group $w={106}>
            <GroupBody $gap={1} $pad={3}>
              <BigButton $w={43}><BigIcon><ClipboardIcon /></BigIcon>Incolla<Caret /></BigButton>
              <Stack>
                <SmallButton $off><ScissorsIcon />Taglia</SmallButton>
                <SmallButton $off><CopyIcon />Copia</SmallButton>
              </Stack>
            </GroupBody>
            <GroupName>Appunti</GroupName>
          </Group>
          <Group $w={153}>
            <GroupBody $gap={6}>
              <BigButton $w={50}><BigIcon><SelectIcon /></BigIcon>Seleziona<Caret /></BigButton>
              <Stack>
                <SmallButton $off><CropIcon />Ritaglia</SmallButton>
                <SmallButton><ResizeIcon />Ridimensiona</SmallButton>
                <SmallButton><RotateIcon />Ruota<Caret /></SmallButton>
              </Stack>
            </GroupBody>
            <GroupName>Immagine</GroupName>
          </Group>
          <Group $w={76}>
            <ToolGrid>
              {tools.map(([name, art]) => (
                <ToolButton key={name} aria-label={name}><svg width="16" height="16" viewBox="0 0 16 16">{art}</svg></ToolButton>
              ))}
            </ToolGrid>
            <Space $n={1} />
            <GroupName>Strumenti</GroupName>
          </Group>
          <Group $w={54}>
            <GroupBody>
              <BigButton $w={44} $on><BigIcon $line><BrushIcon /></BigIcon>Pennelli<Caret /></BigButton>
            </GroupBody>
          </Group>
          <Group $w={245}>
            <GroupBody $gap={6} $pad={6}>
              <Gallery>
                <ShapeGrid>
                  {SHAPES.map((d, i) => (
                    <ToolButton key={i} aria-label={`Forma ${i + 1}`}>
                      <svg width="15" height="15" viewBox="0 0 15 15"><path d={d} fill={i < 2 ? "none" : "#eef7fb"} stroke="#3777a8" /></svg>
                    </ToolButton>
                  ))}
                </ShapeGrid>
                <GallerySide>
                  <svg width="5" height="3"><path d="M0 3h5L2.500 0z" fill="#aaa" /></svg>
                  <svg width="5" height="3"><path d="M0 0h5L2.500 3z" fill="#2b3d55" /></svg>
                  <svg width="7" height="6"><path d="M0 0h7v1H0zM0 2h7L3.500 6z" fill="#2b3d55" /></svg>
                </GallerySide>
              </Gallery>
              <Stack>
                <SmallButton $off><ContourIcon />Contorno<Caret c="#aaa" /></SmallButton>
                <SmallButton $off><FillIcon />Riempi<Caret c="#aaa" /></SmallButton>
              </Stack>
            </GroupBody>
            <GroupName>Forme</GroupName>
          </Group>
          <Group $w={71}>
            <GroupBody>
              <BigButton $w={60}><BigIcon><SizesIcon /></BigIcon>Dimensioni<Caret /></BigButton>
            </GroupBody>
          </Group>
          <Group $w={347}>
            <GroupBody>
              <BigButton $w={40} $on><BigIcon><ColorBox $c="#000" $s={29} /></BigIcon><span>Colore<br />1</span></BigButton>
              <BigButton $w={38}><BigIcon><ColorBox $c="#fff" $s={23} /></BigIcon><span>Colore<br />2</span></BigButton>
              <Palette>
                {Array.from({ length: 30 }, (_, i) => <Swatch key={i} $c={PALETTE[i]} aria-label={`Colore ${i + 1}`} />)}
              </Palette>
              <BigButton $w={48}><BigIcon><RainbowIcon /></BigIcon><span>Modifica<br />colori</span></BigButton>
            </GroupBody>
            <GroupName>Colori</GroupName>
          </Group>
          <Group $w={57}>
            <GroupBody>
              <BigButton $w={46}><BigIcon><Paint3DIcon /></BigIcon><span>Apri<br />Paint 3D</span></BigButton>
            </GroupBody>
          </Group>
        </Ribbon>

        <Workspace>
          <Seismogram />
          <VScroll>
            <Chevron dir={0} />
            <Space $n={108} />
            <VThumb>
              <Pointer width="14" height="20" viewBox="0 0 14 20">
                <path d="M1 1v16l4-3.500 2.500 5.500 2.500-1-2.500-5.500H13z" fill="#fff" stroke="#000" />
              </Pointer>
            </VThumb>
            <Space $n={204} />
            <Chevron dir={180} />
          </VScroll>
        </Workspace>
        <HScroll>
          <Chevron dir={270} />
          <Space $n={273} />
          <HThumb />
          <Space $n={142} />
          <Chevron dir={90} />
        </HScroll>

        <StatusBar>
          <StatusCell $w={149}>
            <svg width="11" height="11" viewBox="0 0 11 11"><path d="M5.500 1v9M1 5.500h9" stroke="#2a4d73" /><path d="M5.500 0l2 2.500h-4zM5.500 11l2-2.500h-4zM0 5.500l2.500-2v4zM11 5.500l-2.500-2v4z" fill="#2a4d73" /></svg>
          </StatusCell>
          <StatusCell $w={148}>
            <svg width="14" height="12" viewBox="0 0 14 12" fill="none" stroke="#2a4d73"><path d="M2 1v8M.5 2.500L2 .5l1.500 2M5 11.500h8" /><path d="M5.500 1.500h7v7h-7z" strokeDasharray="2 1" /></svg>
          </StatusCell>
          <StatusCell $w={149}>
            <svg width="14" height="12" viewBox="0 0 14 12" fill="none" stroke="#2a4d73"><path d="M2 1v8M.5 2.500L2 .5l1.500 2M5 11.500h8" /><path d="M5.500 1.500h7v7h-7z" fill="#fff" /></svg>
            1928 × 1400 pixel
          </StatusCell>
          <StatusCell $w={149}>
            <svg width="14" height="12" viewBox="0 0 14 12"><path d="M2.500.5h10v11h-10zM4.500 1v4h6V1M4.500 11V7.500h6V11" fill="#fff" stroke="#2a4d73" /></svg>
            Dimensioni: 7,7 MB
          </StatusCell>
          <ZoomArea>
            100 %
            <RoundButton aria-label="Riduci"><svg width="8" height="2"><path d="M0 0h8v2H0z" fill="#555" /></svg></RoundButton>
            <Slider type="range" aria-label="Zoom" defaultValue={50} />
            <RoundButton aria-label="Ingrandisci"><svg width="8" height="8"><path d="M0 3h8v2H0zM3 0h2v8H3z" fill="#555" /></svg></RoundButton>
          </ZoomArea>
        </StatusBar>
      </Window>
    </Page>
  );
}
